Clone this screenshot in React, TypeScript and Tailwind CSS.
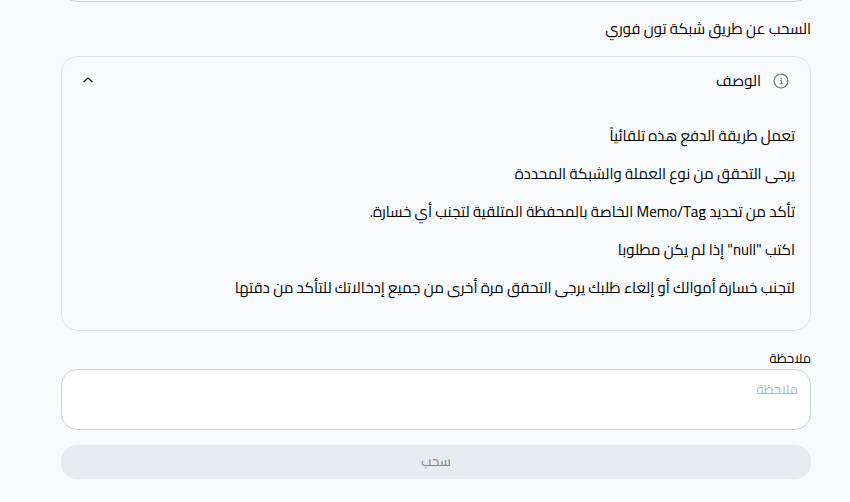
import { useState } from "react";

const lines = [
  "تعمل طريقة الدفع هذه تلقائياً",
  "يرجى التحقق من نوع العملة والشبكة المحددة",
  "تأكد من تحديد Memo/Tag الخاصة بالمحفظة المتلقية لتجنب أي خسارة.",
  'اكتب "null" إذا لم يكن مطلوبا',
  "لتجنب خسارة أموالك أو إلغاء طلبك يرجى التحقق مرة أخرى من جميع إدخالاتك للتأكد من دقتها",
];

function InfoIcon() {
  return (
    <svg width="16" height="16" viewBox="0 0 16 16" fill="none" stroke="#71717a" aria-hidden="true">
      <circle cx="8" cy="8" r="7" strokeWidth="1.2" />
      <path d="M7 7.5h1.4v3M6.6 10.7h3.2" strokeWidth="1" />
      <circle cx="8.2" cy="5.4" r="0.75" fill="#71717a" stroke="none" />
    </svg>
  );
}

function Chevron({ open }: { open: boolean }) {
  return (
    <svg
      className={open ? "" : "rotate-180"}
      width="12"
      height="12"
      viewBox="0 0 12 12"
      fill="none"
      stroke="#18181b"
      strokeWidth="1.2"
      aria-hidden="true"
    >
      <path d="M1.6 7 6 3l4.4 4" />
    </svg>
  );
}

export default function App() {
  const [open, setOpen] = useState(true);
  return (
    <main
      dir="rtl"
      className="min-h-screen bg-[#f8f9fb] pr-[39px] pl-[61px] font-['Cairo','DejaVu_Sans',sans-serif] text-black"
    >
      <div className="flex h-0.5 flex-col justify-end overflow-hidden">
        <div className="h-10 shrink-0 rounded-2xl border border-[#ced4da]" />
      </div>
      <p className="mt-3 text-[15px] leading-[30px]">السحب عن طريق شبكة تون فوري</p>

      <section className="mt-3 rounded-2xl border border-[#dee2e6]">
        <button
          type="button"
          aria-expanded={open}
          onClick={() => setOpen(!open)}
          className="flex h-12 w-full items-center gap-3 pr-[21px] pl-5 text-[15px]"
        >
          <InfoIcon />
          <span className="flex-1 text-right">الوصف</span>
          <Chevron open={open} />
        </button>
        {open && (
          <div className="flex flex-col gap-3 px-[15px] pt-[18px] pb-[29px] text-[15px] leading-[26px]">
            {lines.map((line) => (
              <p key={line}>{line}</p>
            ))}
          </div>
        )}
      </section>

      <label htmlFor="note" className="mt-4 block text-[13px] leading-[22px]">
        ملاحظة
      </label>
      <textarea
        id="note"
        placeholder="ملاحظة"
        className="block h-[61px] w-full resize-none rounded-2xl border border-[#ced4da] bg-white px-3 py-2 text-[13px] leading-[22px] placeholder:text-[#adb5bd]"
      />
      <button
        type="button"
        disabled
        className="mt-[15px] h-[34px] w-full rounded-2xl bg-[#e8ebee] text-[13px] font-semibold text-[#8d8a90]"
      >
        سحب
      </button>
    </main>
  );
}
